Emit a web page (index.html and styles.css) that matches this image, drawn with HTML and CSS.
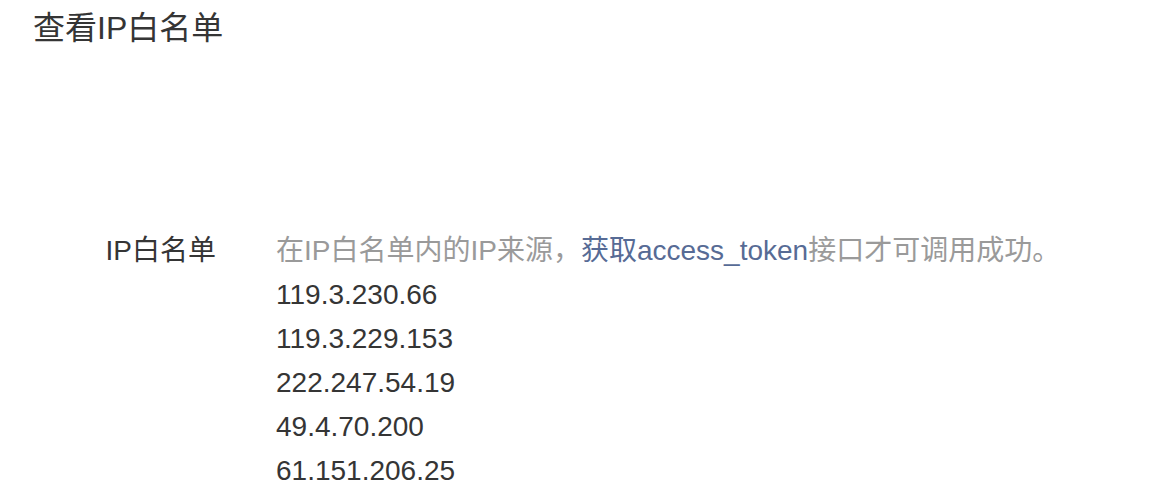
FILE: index.html
```html
<!doctype html>
<html lang="zh-cn">
<head>
	<meta charset="utf-8">
	<title>查看IP白名单</title>
	<link rel="stylesheet" href="styles.css">
</head>
<body>
<div class="page">
	<h2 class="title">查看IP白名单</h2>

	<div class="form">
		<div class="row">
			<label class="row-label">IP白名单</label>
			<div class="row-value">
				<p class="tips">在IP白名单内的IP来源，<a href="#">获取access_token</a>接口才可调用成功。</p>
				<ul class="ip-list">
					<li>119.3.230.66</li>
					<li>119.3.229.153</li>
					<li>222.247.54.19</li>
					<li>49.4.70.200</li>
					<li>61.151.206.25</li>
					<li>61.151.206.33</li>
				</ul>
			</div>
		</div>
	</div>
</div>
</body>
</html>
```

FILE: styles.css
```css
*{ padding: 0; margin: 0}
body{ font-family: "Liberation Sans", "Noto Sans CJK SC", sans-serif; color: #353535; background: #fff; }
.page{ padding: 0 0 0 33px; }
.title{ font-size: 32px; font-weight: normal; line-height: 56px; height: 56px; color: #353535; }
.form{ padding-top: 173px; }
.row{ display: flex; }
.row-label{ width: 183px; font-size: 28px; line-height: 44px; text-align: right; color: #353535; }
.row-value{ margin-left: 60px; font-size: 28px; line-height: 44px; }
.tips{ color: #9a9a9a; }
.tips a{ color: #576b95; text-decoration: none; }
.ip-list{ list-style: none; color: #353535; }
```
